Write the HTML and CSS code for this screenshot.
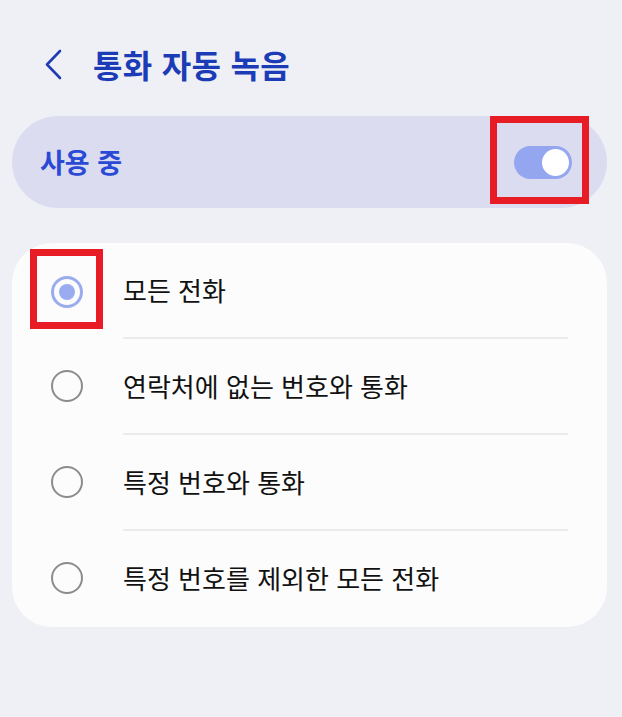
FILE: index.html
```html
<!DOCTYPE html>
<html lang="ko">
<head>
  <meta charset="UTF-8" />
  <title>통화 자동 녹음</title>
  <link rel="stylesheet" href="styles.css">
</head>
<body>

<div class="header">
  <svg class="back" width="18" height="31" viewBox="0 0 18 31">
    <path d="M16 2 L3 15.5 L16 29" fill="none" stroke="#1f3cb4" stroke-width="2.6" stroke-linecap="round" stroke-linejoin="round"/>
  </svg>
  <h1>통화 자동 녹음</h1>
</div>

<div class="master">
  <span class="master-label">사용 중</span>
  <div class="switch"><div class="knob"></div></div>
  <div class="mark mark-switch"></div>
</div>

<div class="card">
  <div class="row">
    <div class="radio checked"><div class="dot"></div></div>
    <span>모든 전화</span>
    <div class="mark mark-radio"></div>
  </div>
  <div class="divider"></div>
  <div class="row">
    <div class="radio"></div>
    <span>연락처에 없는 번호와 통화</span>
  </div>
  <div class="divider"></div>
  <div class="row">
    <div class="radio"></div>
    <span>특정 번호와 통화</span>
  </div>
  <div class="divider"></div>
  <div class="row">
    <div class="radio"></div>
    <span>특정 번호를 제외한 모든 전화</span>
  </div>
</div>

</body>
</html>
```

FILE: styles.css
```css
body {
  margin: 0;
  background: #eff0f5;
  font-family: "Noto Sans CJK KR", "Noto Sans", sans-serif;
  padding: 0 15px 0 12px;
}
.header {
  display: flex;
  align-items: center;
  height: 116px;
  padding-left: 32px;
  box-sizing: border-box;
  padding-top: 12px;
}
.back {
  display: block;
  margin-right: 31px;
}
h1 {
  margin: 0;
  font-size: 32px;
  font-weight: 700;
  color: #1c3bb6;
  letter-spacing: 0.3px;
}
.master {
  position: relative;
  display: flex;
  align-items: center;
  justify-content: space-between;
  height: 92px;
  background: #dbdcef;
  border-radius: 46px;
  padding: 0 35px 0 28px;
}
.master-label {
  font-size: 27px;
  font-weight: 700;
  color: #2a4ad6;
  padding-bottom: 2px;
}
.switch {
  width: 58px;
  height: 33px;
  border-radius: 17px;
  background: #94a6ef;
  display: flex;
  align-items: center;
  justify-content: flex-end;
  padding-right: 3px;
  box-sizing: border-box;
}
.knob {
  width: 27px;
  height: 27px;
  border-radius: 50%;
  background: #fff;
}
.mark {
  position: absolute;
  border: 7px solid #e81c24;
  box-sizing: border-box;
}
.mark-switch {
  right: 18px;
  top: 0;
  width: 99px;
  height: 88px;
}
.card {
  margin-top: 35px;
  background: #fcfcfd;
  border-radius: 40px;
  padding-bottom: 2px;
}
.row {
  position: relative;
  display: flex;
  align-items: center;
  height: 94px;
  padding-left: 39px;
  font-size: 26px;
  color: #111;
}
.row span {
  padding-bottom: 2px;
}
.radio {
  width: 32px;
  height: 32px;
  border-radius: 50%;
  border: 2.5px solid #8c8c8c;
  box-sizing: border-box;
  margin-right: 40px;
  display: flex;
  align-items: center;
  justify-content: center;
}
.radio.checked {
  border: 3px solid #9aabf0;
  margin-top: 4px;
}
.dot {
  width: 16px;
  height: 16px;
  border-radius: 50%;
  background: #9aabf0;
}
.mark-radio {
  left: 18px;
  top: 6px;
  width: 73px;
  height: 80px;
}
.divider {
  height: 2px;
  background: #ebebeb;
  margin: 0 39px 0 111px;
}
```
